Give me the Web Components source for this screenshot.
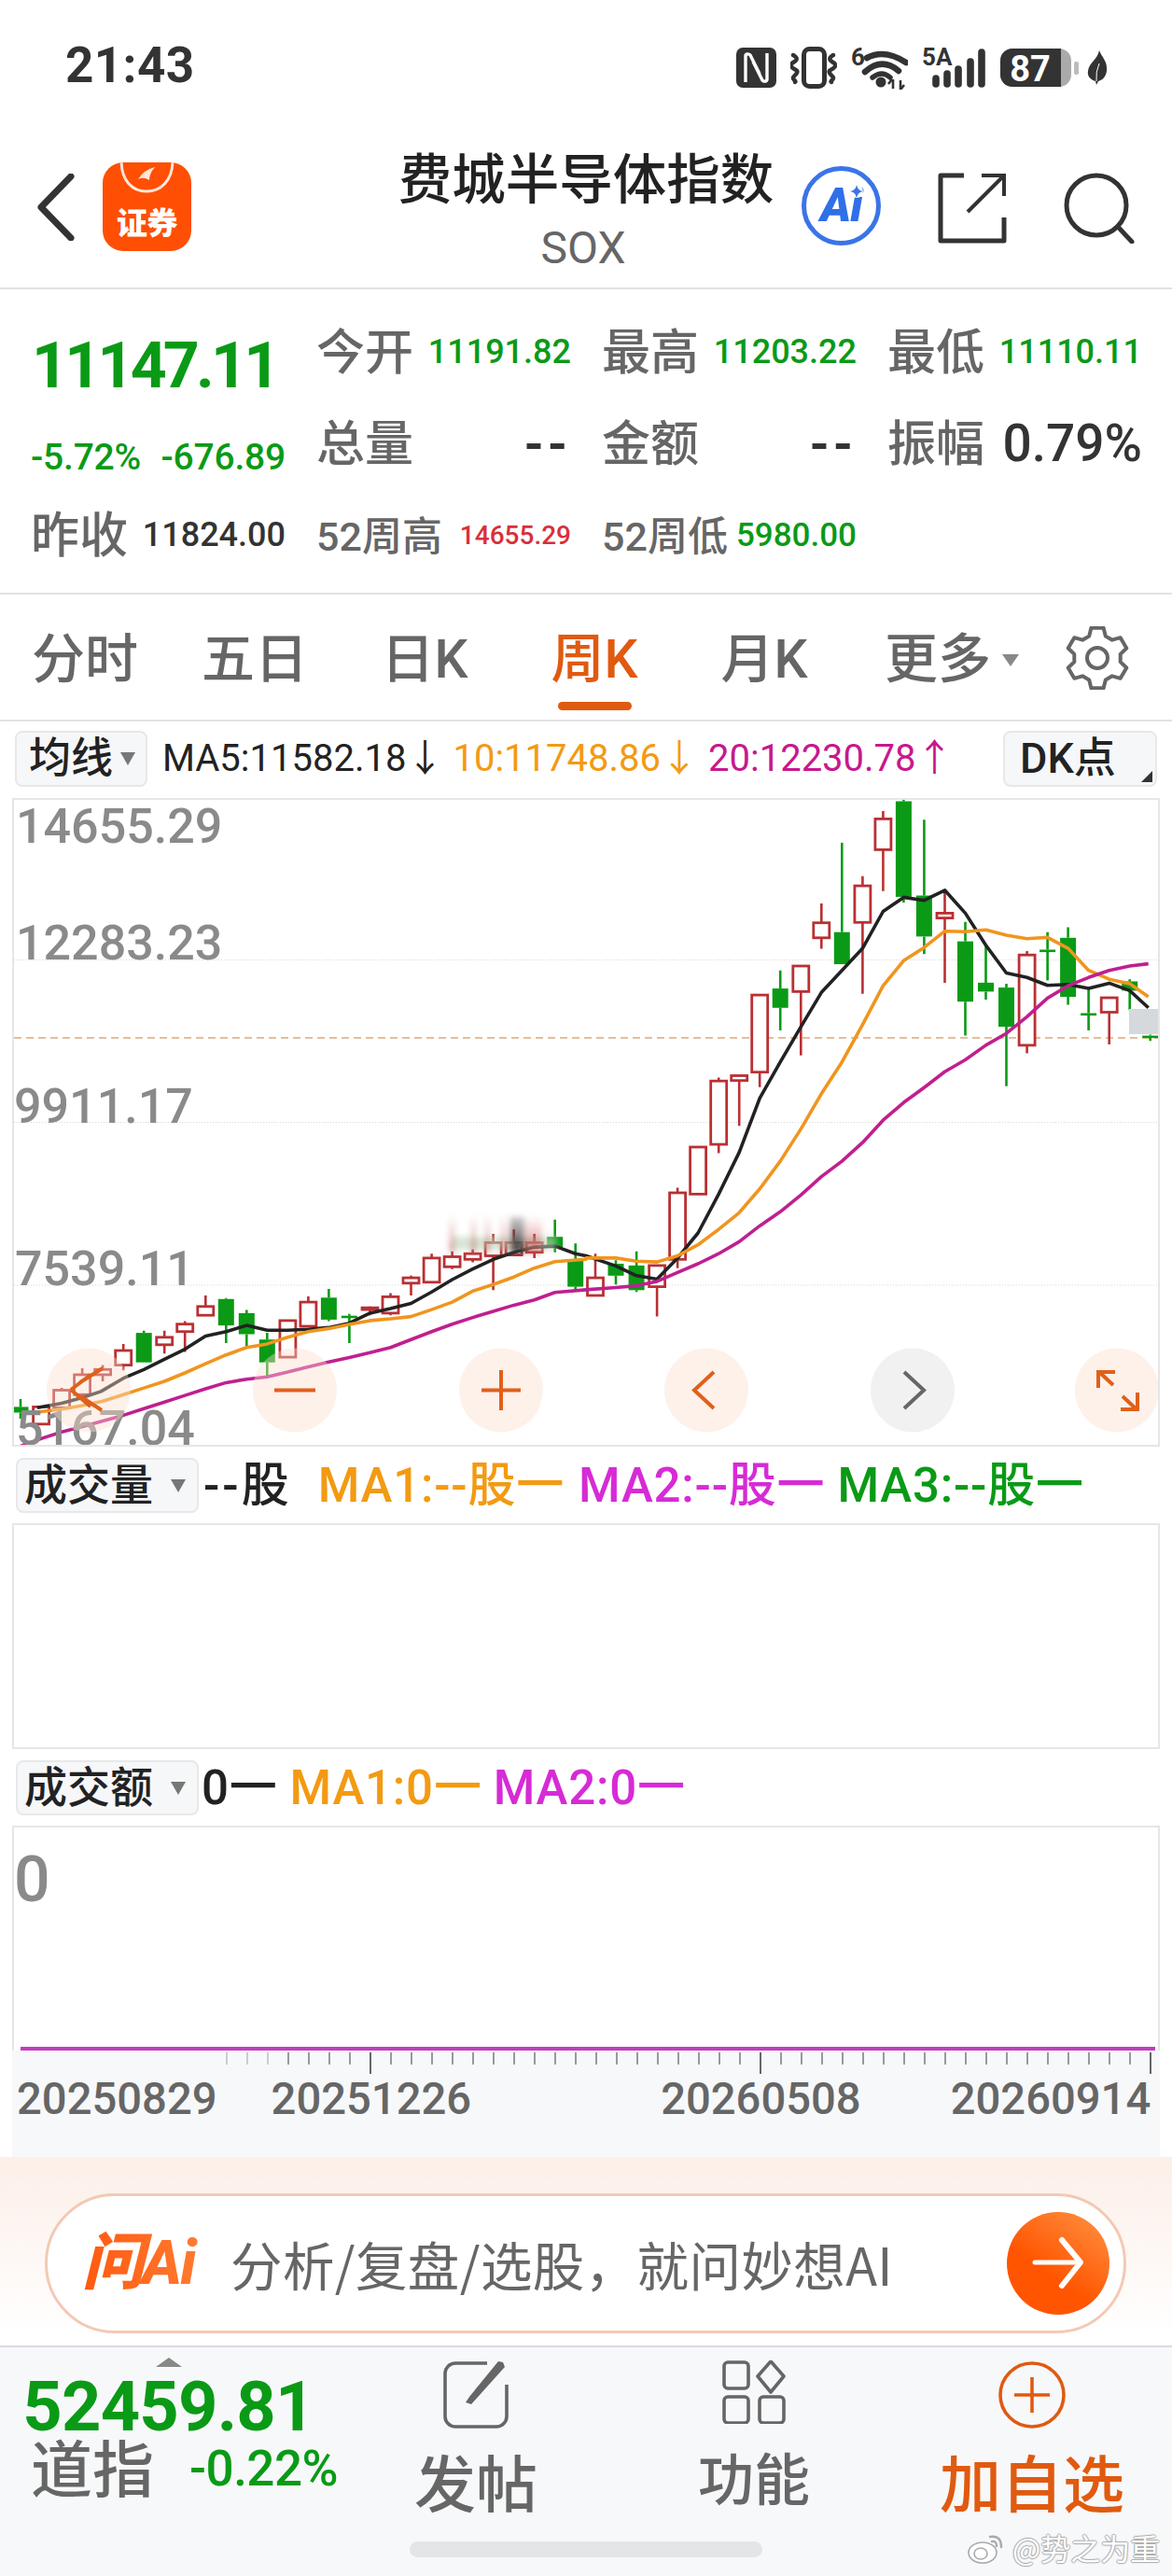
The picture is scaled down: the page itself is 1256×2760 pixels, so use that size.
<!DOCTYPE html>
<html lang="zh">
<head>
<meta charset="utf-8">
<title>SOX</title>
<style>
    html, body { margin: 0; padding: 0; background: #fff; }
    body { width: 1256px; height: 2760px; overflow: hidden; font-family: Roboto, "Noto Sans CJK SC", sans-serif; color: #333; }
</style>
</head>
<body>
<status-bar></status-bar>
<app-header></app-header>
<quote-panel></quote-panel>
<period-tabs></period-tabs>
<ma-legend></ma-legend>
<kline-chart></kline-chart>
<legend-row label="成交量">
    <span style="color:#222;margin-left:5px;letter-spacing:3px">--股</span>
    <span style="color:#f39a12;margin-left:28px">MA1:--股一</span>
    <span style="color:#d62bd6;margin-left:15px">MA2:--股一</span>
    <span style="color:#0a9a16;margin-left:13px">MA3:--股一</span>
</legend-row>
<sub-panel></sub-panel>
<legend-row label="成交额">
    <span style="color:#222;margin-left:3px">0一</span>
    <span style="color:#f39a12;margin-left:13px">MA1:0一</span>
    <span style="color:#d62bd6;margin-left:12px">MA2:0一</span>
</legend-row>
<sub-panel zero></sub-panel>
<date-axis></date-axis>
<ask-ai-bar></ask-ai-bar>
<bottom-bar></bottom-bar>

<script>
class StatusBar extends HTMLElement {
    constructor() {
        super();
        this.attachShadow({ mode: 'open' });
        this.shadowRoot.innerHTML = `
            <style>
                :host { display: flex; box-sizing: border-box; height: 140px; padding: 50px 69px 0 70px; justify-content: space-between; align-items: flex-start; }
                .time { font: 700 53px/46px Roboto, sans-serif; color: #333; margin-top: -3px; letter-spacing: 0.4px; }
                .icons { display: flex; gap: 15px; align-items: flex-start; }
                svg { display: block; height: 46px; }
                .leaf { margin-left: -7px; }
                text { font-family: Roboto, sans-serif; font-weight: 700; fill: #333; }
            </style>
            <div class="time">21:43</div>
            <div class="icons">
                <svg width="43" viewBox="0 0 43 46">
                    <rect x="0" y="1" width="43" height="43" rx="7" fill="#333"/>
                    <path d="M10 38V10c0-2 3-3 5-1l10 20M33 7v28c0 2-3 3-5 1L18 16" fill="none" stroke="#fff" stroke-width="3.4"/>
                </svg>
                <svg width="50" viewBox="0 0 50 46" fill="none" stroke="#333">
                    <rect x="14.5" y="2.5" width="22" height="40" rx="6" stroke-width="5"/>
                    <path d="M3 9c5 3 5 5 0 8s-1 6 3 8-2 6-3 8 4 4 2 5M46 9c-5 3-5 5 0 8s1 6-3 8 2 6 3 8-4 4-2 5" stroke-width="4.4" stroke-linecap="round"/>
                </svg>
                <svg width="61" viewBox="0 0 61 46" fill="none" stroke="#333">
                    <text x="0" y="20" font-size="26" stroke="none">6</text>
                    <path d="M17 12Q36 2 59 17" stroke-width="6.5" stroke-linecap="round"/>
                    <path d="M15 27Q33 11 51 26" stroke-width="6.5" stroke-linecap="round"/>
                    <path d="M23 33Q33 25 42 33" stroke-width="5.5" stroke-linecap="round"/>
                    <circle cx="32" cy="38" r="5.5" fill="#333" stroke="none"/>
                    <path d="M45 35v10M40 40l4-5M53 46v-10M57 41l-4 5" stroke-width="2.6"/>
                </svg>
                <svg width="69" viewBox="0 0 69 46" stroke="#333" stroke-linecap="round" fill="none">
                    <text x="0" y="20" font-size="26" stroke="none">5A</text>
                    <path d="M15 34v6M27 29v11M39 24v16M52 16v24" stroke-width="7.6"/>
                    <path d="M64 6v34" stroke-width="7.6"/>
                </svg>
                <svg width="85" viewBox="0 0 85 46">
                    <rect x="0" y="2" width="76" height="41" rx="13" fill="#aaa"/>
                    <path d="M13 2H65V43H13A13 13 0 0 1 0 30V15A13 13 0 0 1 13 2Z" fill="#333"/>
                    <rect x="79" y="16" width="5" height="14" rx="2" fill="#bbb"/>
                    <text x="32" y="37" font-size="38" text-anchor="middle" style="fill:#fff">87</text>
                </svg>
                <svg class="leaf" width="22" viewBox="0 0 22 46">
                    <path d="M13 4C16 12 22 15 21 26 20 33 16 36 12 37L10 41 9 37C3 35 0 31 1 26 2 17 11 14 13 4Z" fill="#333"/>
                    <path d="M13 18Q9 27 10 37" stroke="#fff" stroke-width="1" fill="none"/>
                </svg>
            </div>
        `;
    }
}
customElements.define('status-bar', StatusBar);

class AppHeader extends HTMLElement {
    constructor() {
        super();
        this.attachShadow({ mode: 'open' });
        this.shadowRoot.innerHTML = `
            <style>
                :host { display: block; position: relative; box-sizing: border-box; height: 170px; border-bottom: 2px solid #e2e2e2; }
                .bar { display: flex; align-items: flex-start; padding: 34px 40px 0 40px; }
                .back { width: 40px; height: 72px; margin-top: 12px; }
                .logo { position: relative; overflow: hidden; box-sizing: border-box; width: 95px; height: 95px; margin-left: 30px; border-radius: 22px; background: #ff4f04; color: #fff; text-align: center; }
                .logo svg { position: absolute; left: 0; top: 0; }
                .logo b { position: absolute; left: 0; right: 0; top: 40px; font: 800 33px/46px "Noto Sans CJK SC", sans-serif; letter-spacing: -0.5px; }
                .title { position: absolute; left: 0; right: 0; top: 12px; text-align: center; pointer-events: none; }
                .name { font: 500 57.5px/72px "Noto Sans CJK SC", sans-serif; color: #222; }
                .code { font: 400 48px/46px Roboto, sans-serif; color: #666; margin-top: 19px; margin-left: -6px; }
                .tools { display: flex; margin-left: auto; align-items: center; }
                .ai { position: relative; box-sizing: border-box; width: 85px; height: 85px; margin-top: 4px; margin-right: 61px; border: 5px solid #3b74e8; border-radius: 50%; color: #2f6fe8; text-align: center; font: italic 900 50px/74px Roboto, sans-serif; letter-spacing: -1px; }
                .ai svg { position: absolute; left: 46px; top: 14px; }
                svg.tool { display: block; }
            </style>
            <div class="bar">
                <svg class="back" viewBox="0 0 40 72"><path d="M36 3L4 36l32 33" fill="none" stroke="#333" stroke-width="7" stroke-linecap="round" stroke-linejoin="round"/></svg>
                <div class="logo">
                    <svg width="95" height="50" viewBox="0 0 95 50">
                        <path d="M20-2C20 20 32 31 47 31S75 20 75-2" fill="none" stroke="#ffe6d8" stroke-width="3"/>
                        <path d="M38 18Q44 8 56 5 50 12 50 19 44 15 38 18Z" fill="#ffe6d8"/>
                    </svg>
                    <b>证券</b>
                </div>
                <div class="tools">
                    <div class="ai">Ai<svg width="16" height="16" viewBox="0 0 16 16"><circle cx="8" cy="8" r="7" fill="#fff"/><path d="M8 1Q9 7 15 8 9 9 8 15 7 9 1 8 7 7 8 1Z" fill="#3b74e8"/></svg></div>
                    <svg class="tool" style="margin-right:61px;margin-top:8px" width="74" height="76" viewBox="0 0 74 76" fill="none" stroke="#333" stroke-width="5">
                        <path d="M28 3H3V73H71V48" stroke-linejoin="round"/>
                        <path d="M32 42L70 4M47 3H71V25" stroke-width="4"/>
                    </svg>
                    <svg class="tool" style="margin-top:8px" width="76" height="76" viewBox="0 0 76 76" fill="none" stroke="#333">
                        <ellipse cx="35" cy="35" rx="32" ry="32" stroke-width="5"/>
                        <path d="M58 58L73 74" stroke-width="5" stroke-linecap="round"/>
                    </svg>
                </div>
            </div>
            <div class="title">
                <div class="name">费城半导体指数</div>
                <div class="code">SOX</div>
            </div>
        `;
    }
}
customElements.define('app-header', AppHeader);

class QuotePanel extends HTMLElement {
    constructor() {
        super();
        this.attachShadow({ mode: 'open' });
        const cell = (label, val, cls) => `<div class="cell"><span class="lb">${label}</span><span class="val ${cls}">${val}</span></div>`;
        this.shadowRoot.innerHTML = `
            <style>
                :host { display: grid; box-sizing: border-box; height: 327px; padding: 17px 31px 15px 33px; grid-template-columns: repeat(4, 273px); column-gap: 33px; grid-auto-rows: 98px; border-bottom: 2px solid #e2e2e2; font-family: Roboto, "Noto Sans CJK SC", sans-serif; }
                .cell { display: flex; justify-content: space-between; align-items: center; }
                .lb { padding-top: 6px; font-size: 52px; line-height: 60px; font-weight: 500; color: #666; white-space: nowrap; }
                .val { padding-top: 2px; font-size: 36px; font-weight: 500; white-space: nowrap; }
                .g { color: #0a9a16; }
                .k { color: #333; }
                .price { font: 700 68px/74px Roboto, sans-serif; letter-spacing: -3.8px; color: #0a9a16; padding-top: 28px; margin-left: 1px; }
                .chg { display: flex; justify-content: space-between; align-items: center; padding-top: 32px; font-size: 39px; font-weight: 500; color: #0a9a16; letter-spacing: -0.2px; }
                .small { font-size: 43px; }
                .red { font-size: 28px; color: #d9303a; }
                .low { font-size: 35px; }
                .big { font-size: 55px; color: #333; }
                .dash { padding-top: 3px; font-weight: 700; font-size: 54px; color: #333; letter-spacing: 4px; }
            </style>
            <div class="price">11147.11</div>
            ${cell('今开', '11191.82', 'g')}
            ${cell('最高', '11203.22', 'g')}
            ${cell('最低', '11110.11', 'g')}
            <div class="chg"><span>-5.72%</span><span>-676.89</span></div>
            ${cell('总量', '--', 'dash')}
            ${cell('金额', '--', 'dash')}
            <div class="cell"><span class="lb">振幅</span><span class="val big">0.79%</span></div>
            ${cell('昨收', '11824.00', 'k')}
            <div class="cell"><span class="lb small">52周高</span><span class="val red">14655.29</span></div>
            <div class="cell"><span class="lb small">52周低</span><span class="val g low">5980.00</span></div>
        `;
    }
}
customElements.define('quote-panel', QuotePanel);

class PeriodTabs extends HTMLElement {
    constructor() {
        super();
        this.attachShadow({ mode: 'open' });
        const tabs = ['分时', '五日', '日K', '周K', '月K'];
        let gear = '';
        const cx = 34, cy = 34, ro = 33, ri = 25;
        for (let i = 0; i < 6; i++) {
            const a = (-90 + i * 60) * Math.PI / 180;
            const pt = (r, d) => (cx + r * Math.cos(a + d)).toFixed(1) + ' ' + (cy + r * Math.sin(a + d)).toFixed(1);
            gear += (i ? 'L' : 'M') + pt(ri, -0.36) + 'L' + pt(ro, -0.2) + 'L' + pt(ro, 0.2) + 'L' + pt(ri, 0.36);
        }
        this.shadowRoot.innerHTML = `
            <style>
                :host { display: grid; box-sizing: border-box; height: 136px; padding-top: 36px; grid-template-columns: repeat(6, 182px) 1fr; border-bottom: 2px solid #e2e2e2; font-family: Roboto, "Noto Sans CJK SC", sans-serif; }
                .tab { display: flex; flex-direction: column; align-items: center; font-size: 57px; line-height: 68px; font-weight: 500; color: #666; }
                .tab i { display: block; width: 79px; height: 9px; margin-top: 11px; border-radius: 5px; }
                .on { color: #e05a10; }
                .on i { background: #e05a10; }
                .more { display: flex; align-items: center; margin-right: -38px; }
                .more u { display: block; margin-left: 12px; border: 9px solid transparent; border-top: 13px solid #888; border-bottom: 0; }
                svg { display: block; margin-left: 50px; margin-top: -2px; }
            </style>
            ${tabs.map((t, i) => `<div class="tab ${i === 3 ? 'on' : ''}">${t}<i></i></div>`).join('')}
            <div class="tab"><div class="more">更多<u></u></div><i></i></div>
            <svg width="68" height="68" viewBox="0 0 68 68" fill="none" stroke="#666" stroke-width="4">
                <path d="${gear}Z" stroke-linejoin="round"/>
                <circle cx="34" cy="34" r="11"/>
            </svg>
        `;
    }
}
customElements.define('period-tabs', PeriodTabs);

class MaLegend extends HTMLElement {
    constructor() {
        super();
        this.attachShadow({ mode: 'open' });
        this.shadowRoot.innerHTML = `
            <style>
                :host { display: flex; box-sizing: border-box; height: 82px; padding: 10px 16px 12px 16px; align-items: center; font: 40px/60px Roboto, "Noto Sans CJK SC", sans-serif; white-space: nowrap; }
                .chip { position: relative; display: flex; box-sizing: border-box; height: 60px; align-items: center; background: #f6f7f9; border: 2px solid #e8e8e8; border-radius: 8px; color: #222; font-weight: 500; }
                .ma { width: 142px; padding-left: 13px; font-size: 45px; }
                .ma u { display: block; margin-left: 8px; border: 8px solid transparent; border-top: 14px solid #777; border-bottom: 0; }
                .dk { width: 165px; margin-left: auto; padding-left: 16px; font-size: 45px; }
                .dk u { position: absolute; right: 3px; bottom: 3px; border-left: 12px solid transparent; border-bottom: 12px solid #333; }
                .k { color: #222; margin-left: 16px; }
                .o { color: #f39a12; margin-left: 10px; }
                .m { color: #c8178f; margin-left: 11px; }
            </style>
            <div class="chip ma">均线<u></u></div>
            <span class="k">MA5:11582.18↓</span>
            <span class="o">10:11748.86↓</span>
            <span class="m">20:12230.78↑</span>
            <div class="chip dk">DK点<u></u></div>
        `;
    }
}
customElements.define('ma-legend', MaLegend);

// candle: [x, high, bodyTop, bodyBottom, low, up?] in zoomed sample units, scaled in render
const LEFT_CANDLES = [
    [55,1375,1393,1406,1420,0],[110,1392,1393,1432,1432,1],[165,1350,1355,1395,1400,1],[220,1305,1320,1365,1370,1],
    [275,1298,1308,1320,1335,1],[330,1250,1265,1298,1310,1],[385,1220,1225,1292,1292,0],[440,1220,1235,1252,1272,1],
    [495,1198,1205,1222,1268,1],[550,1140,1165,1185,1185,1],[605,1146,1148,1208,1248,0],[660,1173,1180,1228,1255,0],
    [715,1225,1240,1292,1322,0],[770,1197,1197,1280,1282,1],[825,1142,1155,1210,1212,1],[880,1125,1145,1195,1198,0],
    [935,1182,1186,1189,1248,0],[990,1165,1168,1172,1185,1],[1045,1135,1143,1180,1185,1],[1100,1095,1100,1112,1140,1],
    [1155,1045,1055,1110,1112,1],[1210,1040,1052,1075,1080,1],[1265,1035,1045,1058,1065,1],[1320,1000,1020,1050,1128,1],
    [1375,990,1020,1048,1050,1],[1430,1000,1020,1042,1055,1],[1485,968,1007,1030,1042,0],[1540,1022,1060,1120,1128,0]
];
const RIGHT_CANDLES = [
    [25,1045,1100,1140,1142,1],[80,1060,1068,1095,1115,0],[135,1040,1072,1128,1132,0],[190,1070,1072,1120,1188,1],
    [245,895,907,1058,1078,1],[300,803,803,910,912,1],[355,645,653,797,817,1],[410,640,641,652,755,1],
    [465,458,458,633,667,1],[520,402,443,487,538,0],[575,392,392,450,595,1],[630,250,294,328,353,1],
    [685,112,315,388,388,0],[740,188,210,293,455,1],[795,40,58,128,222,1],[850,12,18,235,248,0],
    [905,60,232,325,365,0],[960,225,272,283,430,1],[1015,292,336,473,550,0],[1070,345,430,450,468,0],
    [1125,432,441,530,665,0],[1180,358,367,572,590,1],[1235,315,355,358,425,0],[1290,304,328,462,480,0],
    [1345,440,499,503,538,0],[1400,462,464,497,570,1],[1455,422,427,448,492,0],[1510,548,550,554,562,0]
];
const LINES = [
    { color: '#222', left: [[100,1395],[165,1385],[220,1372],[270,1358],[330,1328],[385,1308],[440,1285],[495,1262],[550,1232],[605,1222],[660,1208],[715,1219],[770,1219],[825,1217],[880,1213],[935,1203],[990,1180],[1045,1170],[1100,1158],[1155,1132],[1210,1104],[1265,1080],[1320,1058],[1375,1042],[1430,1030],[1485,1028],[1540,1045]],
      right: [[0,1050],[80,1073],[135,1095],[190,1103],[245,1055],[300,998],[355,910],[410,815],[465,692],[520,610],[575,530],[630,452],[685,402],[740,352],[795,268],[850,236],[905,243],[960,220],[1015,272],[1070,345],[1125,408],[1180,418],[1235,436],[1290,434],[1345,443],[1400,431],[1455,448],[1505,487]] },
    { color: '#f0951e', left: [[100,1405],[165,1398],[220,1390],[275,1380],[330,1365],[385,1350],[440,1335],[495,1316],[550,1295],[605,1275],[660,1258],[715,1250],[770,1235],[825,1222],[880,1215],[935,1206],[990,1197],[1045,1193],[1100,1188],[1155,1172],[1210,1155],[1265,1130],[1320,1115],[1375,1098],[1430,1078],[1485,1063],[1568,1058]],
      right: [[0,1055],[80,1055],[135,1062],[190,1064],[245,1050],[300,1025],[355,990],[410,952],[465,898],[520,835],[575,762],[630,682],[685,610],[740,525],[795,437],[850,380],[905,350],[960,313],[1015,314],[1070,310],[1125,322],[1180,330],[1235,327],[1290,352],[1345,402],[1400,422],[1455,432],[1505,462]] },
    { color: '#c01f8f', left: [[55,1482],[110,1465],[165,1450],[220,1438],[275,1425],[330,1412],[385,1397],[440,1382],[495,1367],[550,1352],[605,1338],[660,1330],[715,1325],[770,1314],[825,1302],[880,1291],[935,1281],[990,1270],[1045,1258],[1100,1240],[1155,1222],[1210,1205],[1265,1190],[1320,1176],[1375,1162],[1430,1150],[1485,1133],[1568,1127]],
      right: [[0,1127],[80,1122],[135,1118],[190,1108],[245,1088],[300,1068],[355,1045],[410,1018],[465,982],[520,950],[575,912],[630,870],[685,835],[740,793],[795,742],[850,702],[905,668],[960,632],[1015,605],[1070,572],[1125,545],[1180,507],[1235,465],[1290,437],[1345,418],[1400,402],[1455,392],[1505,387]] }
];

class KlineChart extends HTMLElement {
    constructor() {
        super();
        this.attachShadow({ mode: 'open' });
        this.render();
    }

    candle(c, off) {
        const sx = v => (off + v / 2.497).toFixed(1);
        const sy = v => (850 + v / 2.119).toFixed(1);
        const x = +sx(c[0]);
        const col = c[5] ? '#b93033' : '#0a9a16';
        const top = +sy(c[2]), bot = +sy(c[3]);
        const wick = `<path d="M${x} ${sy(c[1])}V${top}M${x} ${bot}V${sy(c[4])}" stroke="${col}" stroke-width="2.6"/>`;
        if (c[5]) return wick + `<rect x="${x - 8.5}" y="${top}" width="17" height="${(bot - top).toFixed(1)}" fill="#fff" stroke="${col}" stroke-width="2.8"/>`;
        return wick + `<rect x="${x - 8.5}" y="${top}" width="17" height="${Math.max(bot - top, 2.6).toFixed(1)}" fill="${col}"/>`;
    }

    line(l) {
        const left = l.left.map(p => (p[0] / 2.497).toFixed(1) + ' ' + (850 + p[1] / 2.119).toFixed(1));
        const right = l.right.map(p => (628 + p[0] / 2.497).toFixed(1) + ' ' + (850 + p[1] / 2.119).toFixed(1));
        return `<polyline points="${left.concat(right).join(',')}" fill="none" stroke="${l.color}" stroke-width="3.6" stroke-linejoin="round"/>`;
    }

    render() {
        const btn = (cx, fill) => `<circle cx="${cx}" cy="1489.5" r="45" fill="${fill}"/>`;
        const labels = [['14655.29', 17, 903], ['12283.23', 17, 1028], ['9911.17', 15, 1203], ['7539.11', 16, 1377], ['5167.04', 17, 1548]];
        const streaks = [482, 505, 520, 537, 546];
        this.shadowRoot.innerHTML = `
            <style>
                :host { display: block; box-sizing: border-box; width: 1230px; height: 695px; margin: 0 13px; border: 2px solid #e6e6e6; }
                svg { display: block; }
                text { font: 500 52px Roboto, sans-serif; fill: #8a8a8a; }
            </style>
            <svg width="1226" height="691" viewBox="15 857 1226 691">
                <defs>
                    <filter id="soft" x="-20%" y="-20%" width="140%" height="140%"><feGaussianBlur stdDeviation="3"/></filter>
                    <linearGradient id="fade" x1="0" y1="0" x2="0" y2="1"><stop offset="0" stop-color="#c0393b" stop-opacity="0"/><stop offset="1" stop-color="#c0393b" stop-opacity=".6"/></linearGradient>
                    <linearGradient id="fadeDark" x1="0" y1="0" x2="0" y2="1"><stop offset="0" stop-color="#555" stop-opacity=".3"/><stop offset="1" stop-color="#333" stop-opacity=".95"/></linearGradient>
                </defs>
                <path d="M15 1028.5H1241M15 1202.5H1241M15 1377H1241" stroke="#d8d8d8" stroke-width="1" stroke-dasharray="1 2"/>
                <path d="M15 1112H1241" stroke="#e0a878" stroke-width="1.6" stroke-dasharray="8 5"/>
                ${LEFT_CANDLES.map(c => this.candle(c, 0)).join('')}
                ${RIGHT_CANDLES.map(c => this.candle(c, 628)).join('')}
                ${LINES.map(l => this.line(l)).join('')}
                <rect x="1210" y="1081" width="33" height="27" fill="#d5d8dd"/>
                <g filter="url(#soft)">
                    <rect x="484" y="1325" width="112" height="14" fill="#bcd6bc" opacity=".6"/>
                    ${streaks.map(x => `<rect x="${x}" y="1302" width="5" height="40" fill="url(#fade)"/>`).join('')}
                    <rect x="547" y="1304" width="15" height="38" fill="url(#fadeDark)"/>
                    <rect x="563" y="1304" width="18" height="38" fill="url(#fade)"/>
                </g>
                ${labels.map(l => `<text x="${l[1]}" y="${l[2]}">${l[0]}</text>`).join('')}
                ${[95, 316, 537, 757, 1197].map(x => btn(x, 'rgba(250,222,205,.42)')).join('')}
                ${btn(978, 'rgba(225,225,225,.45)')}
                <g fill="none" stroke="#e0601a" stroke-width="4">
                    <path d="M76 1489L97 1473M76 1489L97 1507M86 1481L110 1466M86 1496L109 1511"/>
                    <path d="M294 1489.5H338"/>
                    <path d="M516 1489.5H558M537 1468V1511"/>
                    <path d="M765 1470L744 1489.5 765 1509"/>
                    <path d="M1177 1487V1470H1195M1178 1470L1193 1484M1219 1492V1510H1201M1218 1510L1203 1496"/>
                </g>
                <path d="M969 1470L990 1489.5 969 1509" fill="none" stroke="#666" stroke-width="4"/>
            </svg>
        `;
    }
}
customElements.define('kline-chart', KlineChart);

class LegendRow extends HTMLElement {
    constructor() {
        super();
        this.attachShadow({ mode: 'open' });
        this.shadowRoot.innerHTML = `
            <style>
                :host { display: flex; box-sizing: border-box; height: 82px; padding: 12px 0 11px 17px; align-items: center; font: 500 51px/59px Roboto, "Noto Sans CJK SC", sans-serif; white-space: nowrap; }
                ::slotted(span) { letter-spacing: 0.8px; }
                .chip { display: flex; box-sizing: border-box; width: 196px; height: 59px; padding-left: 7px; align-items: center; font-size: 46px; background: #f6f7f9; border: 2px solid #e8e8e8; border-radius: 8px; color: #222; }
                u { display: block; margin-left: 19px; border: 8px solid transparent; border-top: 14px solid #777; border-bottom: 0; }
            </style>
            <div class="chip"><span id="lb"></span><u></u></div>
            <slot></slot>
        `;
    }

    connectedCallback() {
        this.shadowRoot.getElementById('lb').textContent = this.getAttribute('label');
    }
}
customElements.define('legend-row', LegendRow);

class SubPanel extends HTMLElement {
    constructor() {
        super();
        this.attachShadow({ mode: 'open' });
    }

    connectedCallback() {
        const zero = this.hasAttribute('zero');
        this.shadowRoot.innerHTML = `
            <style>
                :host { display: block; position: relative; box-sizing: border-box; width: 1230px; height: ${zero ? 241 : 242}px; margin: 0 13px; border: 2px solid #e6e6e6; ${zero ? 'border-bottom: 0;' : ''} }
                .zero { padding: 24px 0 0 0; font: 500 68px/64px Roboto, sans-serif; color: #8a8a8a; }
                .base { position: absolute; left: 7px; right: 3px; bottom: 0; height: 4px; background: #c43bbf; }
            </style>
            ${zero ? '<div class="zero">0</div><div class="base"></div>' : ''}
        `;
    }
}
customElements.define('sub-panel', SubPanel);

class DateAxis extends HTMLElement {
    constructor() {
        super();
        this.attachShadow({ mode: 'open' });
        const ticks = [];
        for (let x = 243; x <= 1233; x += 22) {
            const major = x === 397 || x === 815 || x === 1233;
            ticks.push(`<path d="M${x - 13} 2V${major ? 25 : 15}" stroke="${major ? '#666' : '#999'}" stroke-width="2" opacity="${x < 300 ? 0.45 : 1}"/>`);
        }
        this.shadowRoot.innerHTML = `
            <style>
                :host { display: block; box-sizing: border-box; width: 1230px; height: 114px; margin: 0 13px; background: #f7f8fa; font: 500 47.2px/46px Roboto, sans-serif; color: #666; }
                svg { display: block; }
                .dates { display: flex; height: 46px; margin-top: 2px; padding-left: 5px; }
            </style>
            <svg width="1230" height="27">${ticks.join('')}</svg>
            <div class="dates">
                <span>20250829</span>
                <span style="margin-left:58px">20251226</span>
                <span style="margin-left:203px">20260508</span>
                <span style="margin-left:96px">20260914</span>
            </div>
        `;
    }
}
customElements.define('date-axis', DateAxis);

class AskAiBar extends HTMLElement {
    constructor() {
        super();
        this.attachShadow({ mode: 'open' });
        this.shadowRoot.innerHTML = `
            <style>
                :host { display: block; box-sizing: border-box; height: 204px; padding: 39px 49px 0 48px; background: linear-gradient(#fcefe8, #fff 95%); border-bottom: 2px solid #d8dbe2; }
                .pill { display: flex; box-sizing: border-box; height: 150px; padding: 0 15px 0 37px; align-items: center; background: #fff; border: 3px solid #f3c9b4; border-radius: 75px; }
                .brand { width: 125px; font: italic 800 66px/70px Roboto, "Noto Sans CJK SC", sans-serif; white-space: nowrap; letter-spacing: -2px; background: linear-gradient(90deg, #ff5a10, #ff7a30); -webkit-background-clip: text; background-clip: text; color: transparent; }
                .hint { margin-left: 34px; font: 55.5px/70px "Noto Sans CJK SC", sans-serif; letter-spacing: 0.4px; color: #666; white-space: nowrap; }
                .go { display: flex; width: 110px; height: 110px; margin-left: auto; align-items: center; justify-content: center; border-radius: 50%; background: linear-gradient(215deg, #ff9445, #ff5500 60%); }
            </style>
            <div class="pill">
                <div class="brand">问Ai</div>
                <div class="hint">分析/复盘/选股&#xFF0C;就问妙想AI</div>
                <div class="go">
                    <svg width="56" height="60" viewBox="0 0 56 60" fill="none" stroke="#fff" stroke-linecap="round" stroke-linejoin="round">
                        <path d="M3 29H48" stroke-width="5"/>
                        <path d="M32 5L52 29 32 54" stroke-width="6"/>
                    </svg>
                </div>
            </div>
        `;
    }
}
customElements.define('ask-ai-bar', AskAiBar);

class NavItem extends HTMLElement {
    constructor() {
        super();
        this.attachShadow({ mode: 'open' });
        this.shadowRoot.innerHTML = `
            <style>
                :host { display: flex; flex-direction: column; align-items: center; padding-top: 14px; font: 500 66px/72px "Noto Sans CJK SC", sans-serif; color: #666; }
                .ic { height: 74px; margin-bottom: 18px; }
                :host([small]) { font-size: 60px; }
                :host([small]) .ic { margin-bottom: 14px; }
                :host([on]) { color: #e05a10; }
            </style>
            <div class="ic"><slot name="icon"></slot></div>
            <slot></slot>
        `;
    }
}
customElements.define('nav-item', NavItem);

class BottomBar extends HTMLElement {
    constructor() {
        super();
        this.attachShadow({ mode: 'open' });
        this.shadowRoot.innerHTML = `
            <style>
                :host { display: grid; position: relative; box-sizing: border-box; height: 245px; grid-template-columns: 361px repeat(3, 298px); background: #f7f8fa; font-family: Roboto, "Noto Sans CJK SC", sans-serif; }
                .idx { display: flex; flex-direction: column; align-items: center; }
                .tri { margin-top: 11px; border: 14px solid transparent; border-bottom: 10px solid #888; border-top: 0; }
                .num { margin-top: 8px; font: 700 74px/70px Roboto, sans-serif; color: #0a9a16; letter-spacing: -0.8px; }
                .sub { display: flex; align-items: center; align-self: flex-start; margin-left: 33px; white-space: nowrap; }
                .sub b { margin-top: -8px; font: 500 66px/62px "Noto Sans CJK SC", sans-serif; color: #666; }
                .sub span { margin-left: 38px; font: 500 53px/62px Roboto, sans-serif; color: #0a9a16; letter-spacing: -0.5px; }
                svg { display: block; }
                .home { position: absolute; left: 439px; top: 208px; width: 378px; height: 17px; border-radius: 9px; background: #e4e5e7; }
                .mark { position: absolute; left: 1037px; top: 194px; display: flex; align-items: center; font: 32px/40px "Noto Sans CJK SC", sans-serif; color: #fff; text-shadow: 1px 0 1px #aaa, -1px 0 1px #aaa, 0 1px 1px #aaa, 0 -1px 1px #aaa; }
            </style>
            <div class="idx">
                <div class="tri"></div>
                <div class="num">52459.81</div>
                <div class="sub"><b>道指</b><span>-0.22%</span></div>
            </div>
            <nav-item>
                <svg slot="icon" width="72" height="74" viewBox="0 0 72 74" fill="none" stroke="#666" stroke-width="3.6">
                    <path d="M48 3H14A11 11 0 0 0 3 14V60A11 11 0 0 0 14 71H58A11 11 0 0 0 69 60V26" stroke-linejoin="round"/>
                    <path d="M24 46L30 48 66 8 64 3 59 2 28 40Z" fill="#666" stroke="none" transform="translate(1 -1)"/>
                </svg>
                发帖
            </nav-item>
            <nav-item small>
                <svg slot="icon" width="68" height="68" viewBox="0 0 68 68" fill="none" stroke="#666" stroke-width="3.6">
                    <rect x="2" y="2" width="26" height="28" rx="4"/>
                    <path d="M52 1L66 17 52 34 38 17Z" stroke-linejoin="round"/>
                    <rect x="2" y="39" width="26" height="28" rx="4"/>
                    <rect x="40" y="39" width="26" height="28" rx="4"/>
                </svg>
                功能
            </nav-item>
            <nav-item on>
                <svg slot="icon" width="74" height="74" viewBox="0 0 74 74" fill="none" stroke="#e05a10" stroke-width="3.6">
                    <circle cx="37" cy="37" r="34"/>
                    <path d="M18 37H56M37 18V56"/>
                </svg>
                加自选
            </nav-item>
            <div class="home"></div>
            <div class="mark">
                <svg width="40" height="36" viewBox="0 0 40 36" fill="#fff" stroke="#aaa" stroke-width="1.6">
                    <ellipse cx="16" cy="24" rx="15" ry="11"/>
                    <ellipse cx="14" cy="25" rx="7" ry="6"/>
                    <path d="M24 7Q36 5 36 18M26 12Q31 11 31 17" fill="none" stroke-linecap="round" stroke-width="2.4"/>
                </svg>
                <span style="margin-left:8px">@势之为重</span>
            </div>
        `;
    }
}
customElements.define('bottom-bar', BottomBar);
</script>
</body>
</html>
